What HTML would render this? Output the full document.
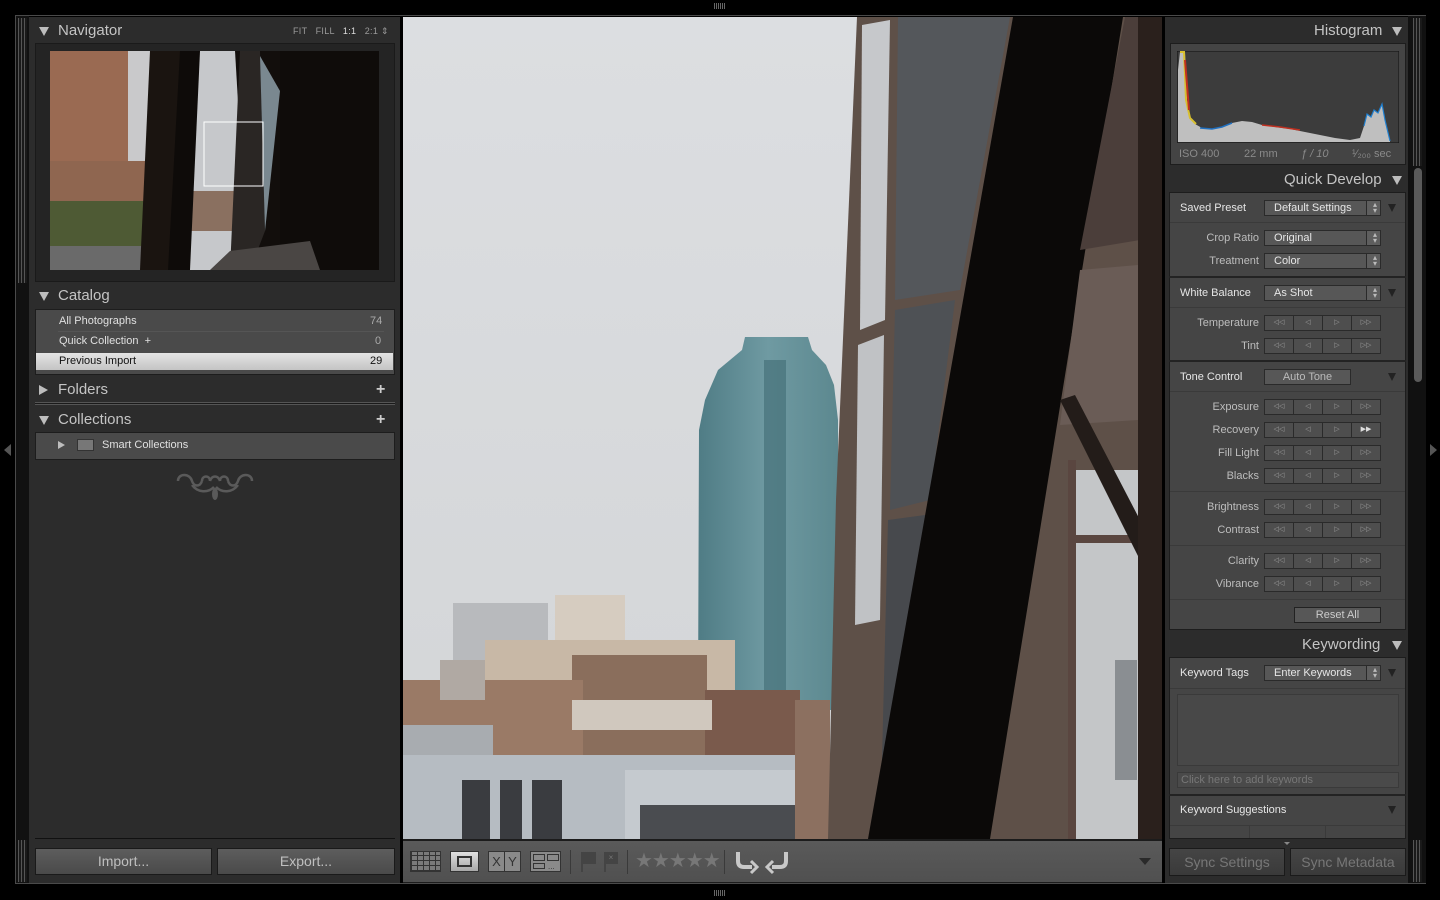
<!DOCTYPE html>
<html><head><meta charset="utf-8">
<style>
*{box-sizing:border-box;margin:0;padding:0}
body{width:1440px;height:900px;background:#000;position:relative;overflow:hidden;font-family:"Liberation Sans",sans-serif;color:#c8c8c8}
.a{position:absolute}
.hdr{position:absolute;font-size:15px;color:#c4c4c4}
.tri{position:absolute;width:0;height:0;border-left:5px solid transparent;border-right:5px solid transparent;border-top:9px solid #bdbdbd}
.trir{position:absolute;width:0;height:0;border-top:5px solid transparent;border-bottom:5px solid transparent;border-left:9px solid #bdbdbd}
.sm{font-size:11px;color:#e0e0e0}
.lbl{position:absolute;font-size:11px;color:#bdbdbd;text-align:right;width:90px;left:1169px}
.lblL{position:absolute;font-size:11px;color:#e6e6e6;left:1180px}
.dd{position:absolute;left:1264px;width:117px;height:16px;background:#575757;border:1px solid #2a2a2a;font-size:11px;color:#e6e6e6;padding:1px 0 0 9px}
.dd:after{content:"";position:absolute;right:0;top:0;width:13px;height:14px;border-left:1px solid #2a2a2a;background:#5e5e5e}
.dd i{position:absolute;right:3px;top:1px;font-style:normal;font-size:8px;color:#bbb;line-height:6px;z-index:2}
.st{position:absolute;left:1264px;width:117px;height:16px;background:#4e4e4e;border:1px solid #2a2a2a;display:flex}
.st span{flex:1;border-left:1px solid #2a2a2a;font-size:7px;color:#999;text-align:center;line-height:14px}
.st span:first-child{border-left:none}
.ln{position:absolute;height:1px;background:#3a3a3a;left:1170px;width:235px}
.sep{position:absolute;height:2px;background:#232323;left:1169px;width:237px}
.btn{position:absolute;background:linear-gradient(#5d5d5d,#4a4a4a);border:1px solid #1a1a1a;font-size:14px;color:#bfbfbf;text-align:center}
</style></head><body>

<div class="a" style="left:15px;top:15px;width:1411px;height:869px;border:1px solid #4a4a4a"></div>
<div class="a" style="left:16px;top:16px;width:13px;height:867px;background:#111"></div>
<div class="a" style="left:18px;top:18px;width:9px;height:265px;background:repeating-linear-gradient(90deg,#555 0 1px,#1a1a1a 1px 3px)"></div>
<div class="a" style="left:18px;top:840px;width:9px;height:42px;background:repeating-linear-gradient(90deg,#555 0 1px,#1a1a1a 1px 3px)"></div>
<div class="a" style="left:1408px;top:16px;width:18px;height:867px;background:#111"></div>
<div class="a" style="left:1413px;top:18px;width:9px;height:148px;background:repeating-linear-gradient(90deg,#555 0 1px,#1a1a1a 1px 3px)"></div>
<div class="a" style="left:1413px;top:840px;width:9px;height:42px;background:repeating-linear-gradient(90deg,#555 0 1px,#1a1a1a 1px 3px)"></div>
<div class="a" style="left:1414px;top:168px;width:8px;height:214px;background:#5a5a5a;border-radius:4px"></div>

<div class="a" style="left:4px;top:444px;width:0;height:0;border-top:6px solid transparent;border-bottom:6px solid transparent;border-right:7px solid #555"></div>
<div class="a" style="left:1430px;top:444px;width:0;height:0;border-top:6px solid transparent;border-bottom:6px solid transparent;border-left:7px solid #555"></div>
<div class="a" style="left:714px;top:3px;width:12px;height:6px;background:repeating-linear-gradient(90deg,#666 0 1px,transparent 1px 2px)"></div>
<div class="a" style="left:714px;top:890px;width:12px;height:6px;background:repeating-linear-gradient(90deg,#666 0 1px,transparent 1px 2px)"></div>

<!-- LEFT PANEL -->
<div class="a" style="left:29px;top:17px;width:371px;height:866px;background:#2c2c2c"></div>
<div class="tri" style="left:39px;top:27px"></div>
<div class="hdr" style="left:58px;top:22px">Navigator</div>
<div class="a" style="left:293px;top:26px;font-size:9px;color:#9a9a9a;letter-spacing:.3px">FIT &nbsp;&nbsp;FILL &nbsp;&nbsp;<span style="color:#ddd">1:1</span> &nbsp;&nbsp;2:1 ⇕</div>
<div class="a" style="left:35px;top:43px;width:360px;height:239px;background:#242424;border:1px solid #1a1a1a"></div>
<svg class="a" style="left:50px;top:51px" width="329" height="219" viewBox="0 0 329 219">
<rect width="329" height="219" fill="#120e0c"/>
<rect x="0" y="0" width="120" height="219" fill="#c9c9cb"/>
<rect x="0" y="0" width="78" height="150" fill="#9a6a52"/>
<rect x="0" y="110" width="100" height="40" fill="#8f6650"/>
<rect x="0" y="150" width="100" height="55" fill="#4e5a34"/>
<rect x="0" y="195" width="100" height="24" fill="#6a6a6a"/>
<polygon points="100,0 140,0 128,219 90,219" fill="#1a1410"/>
<polygon points="145,0 185,0 198,220 138,220" fill="#c6c8cb"/>
<rect x="135" y="140" width="60" height="40" fill="#8a7060"/>
<polygon points="130,0 150,0 140,219 118,219" fill="#0e0b09"/>
<polygon points="190,0 210,0 215,180 200,219 180,219" fill="#2a2624"/>
<polygon points="210,5 230,40 215,180" fill="#7a8890"/>
<rect x="230" y="0" width="99" height="219" fill="#0f0c0a"/>
<polygon points="180,200 260,190 270,219 160,219" fill="#4a4644"/>
<rect x="154" y="71" width="59" height="64" fill="none" stroke="#fff" stroke-width="1"/>
</svg>

<div class="tri" style="left:39px;top:292px"></div>
<div class="hdr" style="left:58px;top:287px">Catalog</div>
<div class="a" style="left:35px;top:309px;width:360px;height:66px;background:#4a4a4a;border:1px solid #1d1d1d"></div>
<div class="a" style="left:58px;top:331px;width:326px;height:1px;background:#555"></div>
<div class="a sm" style="left:59px;top:315px">All Photographs</div><div class="a sm" style="left:370px;top:315px;color:#aaa">74</div>
<div class="a sm" style="left:59px;top:335px">Quick Collection &nbsp;+</div><div class="a sm" style="left:375px;top:335px;color:#aaa">0</div>
<div class="a" style="left:36px;top:353px;width:357px;height:17px;background:linear-gradient(#e4e4e4,#c4c4c4)"></div>
<div class="a sm" style="left:59px;top:355px;color:#111">Previous Import</div><div class="a sm" style="left:370px;top:355px;color:#111">29</div>

<div class="trir" style="left:39px;top:385px"></div>
<div class="hdr" style="left:58px;top:381px">Folders</div>
<div class="a" style="left:376px;top:381px;font-size:16px;color:#ccc;font-weight:bold">+</div>
<div class="a" style="left:35px;top:402px;width:360px;height:3px;border-top:1px solid #555;border-bottom:1px solid #555;background:#1a1a1a"></div>
<div class="tri" style="left:39px;top:416px"></div>
<div class="hdr" style="left:58px;top:411px">Collections</div>
<div class="a" style="left:376px;top:411px;font-size:16px;color:#ccc;font-weight:bold">+</div>
<div class="a" style="left:35px;top:432px;width:360px;height:28px;background:#4a4a4a;border:1px solid #1d1d1d"></div>
<div class="trir" style="left:58px;top:441px;border-left-width:7px;border-top-width:4px;border-bottom-width:4px"></div>
<div class="a" style="left:77px;top:439px;width:17px;height:12px;background:#777;border:1px solid #333"></div>
<div class="a sm" style="left:102px;top:439px">Smart Collections</div>
<svg class="a" style="left:172px;top:467px" width="86" height="34" viewBox="0 0 86 34" fill="none" stroke="#5a5a5a" stroke-width="2.5">
<path d="M6,14 c0,-8 12,-8 14,0 c2,6 8,6 10,0 M80,14 c0,-8 -12,-8 -14,0 c-2,6 -8,6 -10,0 M30,14 c0,-6 8,-6 8,0 M56,14 c0,-6 -8,-6 -8,0 M38,14 c2,-6 8,-6 10,0 M20,18 c6,8 16,8 22,2 M66,18 c-6,8 -16,8 -22,2"/>
<ellipse cx="43" cy="27" rx="3" ry="6" fill="#5a5a5a" stroke="none"/>
</svg>

<div class="a" style="left:35px;top:838px;width:360px;height:1px;background:#111"></div>
<div class="btn" style="left:35px;top:848px;width:177px;height:27px;line-height:25px">Import...</div>
<div class="btn" style="left:217px;top:848px;width:178px;height:27px;line-height:25px">Export...</div>

<!-- PHOTO -->
<svg class="a" style="left:403px;top:17px" width="759" height="822" viewBox="403 17 759 822">
<defs><linearGradient id="sky" x1="0" y1="0" x2="0" y2="1"><stop offset="0" stop-color="#dcdee1"/><stop offset="1" stop-color="#d3d5d7"/></linearGradient>
<linearGradient id="tw" x1="0" y1="0" x2="1" y2="0"><stop offset="0" stop-color="#4f7c85"/><stop offset=".5" stop-color="#6f9aa2"/><stop offset="1" stop-color="#5c888f"/></linearGradient></defs>
<rect x="403" y="17" width="759" height="822" fill="url(#sky)"/>
<path d="M742,350 L745,337 L808,337 L812,350 L826,365 L834,385 L838,420 L838,710 L698,710 L699,430 L705,400 L718,370 Z" fill="url(#tw)"/>
<rect x="764" y="360" width="22" height="350" fill="#3f6a73" opacity=".6"/>
<rect x="453" y="603" width="95" height="110" fill="#b8babd"/>
<rect x="555" y="595" width="70" height="60" fill="#d6ccc0"/>
<rect x="485" y="640" width="250" height="100" fill="#c8b8a6"/>
<rect x="572" y="655" width="135" height="140" fill="#8a6e5c"/>
<rect x="403" y="680" width="180" height="80" fill="#9a7a66"/>
<rect x="440" y="660" width="45" height="40" fill="#b0a9a3"/>
<rect x="705" y="690" width="95" height="120" fill="#7a5a4c"/>
<rect x="572" y="700" width="140" height="30" fill="#d0c8be"/>
<rect x="403" y="725" width="90" height="30" fill="#a8acb0"/>
<rect x="403" y="755" width="395" height="84" fill="#b6bcc2"/>
<rect x="625" y="770" width="200" height="69" fill="#c5cacf"/>
<rect x="462" y="780" width="100" height="59" fill="#3a3c40"/>
<rect x="490" y="780" width="10" height="59" fill="#b6bcc2"/>
<rect x="522" y="780" width="10" height="59" fill="#b6bcc2"/>
<rect x="640" y="805" width="160" height="34" fill="#4a4c50"/>
<rect x="795" y="700" width="35" height="139" fill="#8c7060"/>
<polygon points="857,17 1162,17 1162,839 828,839 836,500" fill="#5e5048"/>
<polygon points="862,25 890,20 885,320 860,330" fill="#c6c8cb"/>
<polygon points="858,345 884,335 880,620 855,625" fill="#c0c2c5"/>
<polygon points="898,17 1010,17 960,290 895,300" fill="#54575b"/>
<polygon points="895,310 955,300 930,500 890,510" fill="#4e5155"/>
<polygon points="888,520 925,515 900,839 880,839" fill="#47494d"/>
<polygon points="1013,17 1123,17 990,839 868,839" fill="#0b0908"/>
<polygon points="1125,17 1140,17 1140,240 1080,250" fill="#4b3e3a"/>
<polygon points="1080,270 1138,265 1138,420 1060,425" fill="#6a5c56"/>
<rect x="1075" y="470" width="65" height="369" fill="#c4c6c8"/>
<rect x="1068" y="460" width="8" height="379" fill="#5a4640"/>
<rect x="1068" y="535" width="72" height="8" fill="#5a4640"/>
<polygon points="1060,400 1075,395 1140,520 1140,560" fill="#231c19"/>
<rect x="1138" y="17" width="24" height="822" fill="#2a201c"/>
<rect x="1115" y="660" width="22" height="120" fill="#8a8e92"/>
</svg>

<!-- TOOLBAR -->
<div class="a" style="left:403px;top:839px;width:759px;height:44px;background:#1c1c1c"></div>
<div class="a" style="left:403px;top:841px;width:759px;height:41px;background:linear-gradient(#5a5a5a,#505050)"></div>
<div class="a" style="left:410px;top:851px;width:31px;height:21px;background:repeating-linear-gradient(90deg,#333 0 1px,transparent 1px 6px),repeating-linear-gradient(0deg,#333 0 1px,#7a7a7a 1px 5px);border:1px solid #333"></div>
<div class="a" style="left:450px;top:851px;width:29px;height:21px;background:linear-gradient(#e0e0e0,#a8a8a8);border:1px solid #333"><div style="margin:4px 6px;height:11px;border:2px solid #333"></div></div>
<div class="a" style="left:488px;top:851px;width:33px;height:21px;background:#8a8a8a;border:1px solid #333;font-size:13px;color:#333;line-height:19px;display:flex"><span style="flex:1;text-align:center;border-right:1px solid #333">X</span><span style="flex:1;text-align:center">Y</span></div>
<div class="a" style="left:530px;top:851px;width:31px;height:21px;background:#8a8a8a;border:1px solid #333"><div class="a" style="left:2px;top:2px;width:12px;height:7px;border:1px solid #333"></div><div class="a" style="left:16px;top:2px;width:12px;height:7px;border:1px solid #333"></div><div class="a" style="left:2px;top:11px;width:12px;height:6px;border:1px solid #333"></div><div class="a" style="left:17px;top:12px;font-size:8px;color:#333;line-height:6px">...</div></div>
<div class="a" style="left:570px;top:850px;width:1px;height:24px;background:#3a3a3a"></div>
<div class="a" style="left:581px;top:852px;width:15px;height:12px;background:#444"></div><div class="a" style="left:581px;top:852px;width:2px;height:20px;background:#444"></div>
<div class="a" style="left:604px;top:852px;width:14px;height:12px;background:#444;font-size:8px;color:#777;text-align:center;line-height:11px">×</div><div class="a" style="left:604px;top:852px;width:2px;height:20px;background:#444"></div>
<div class="a" style="left:627px;top:850px;width:1px;height:24px;background:#3a3a3a"></div>
<div class="a" style="left:635px;top:849px;font-size:20px;line-height:24px;color:#777;letter-spacing:-1px">★★★★★</div>
<div class="a" style="left:724px;top:850px;width:1px;height:24px;background:#3a3a3a"></div>
<svg class="a" style="left:734px;top:849px" width="56" height="26" viewBox="0 0 56 26" fill="none" stroke="#c8c8c8" stroke-width="4">
<path d="M4,3 v9 q0,6 6,6 h8"/><path d="M17,12 l6,6 l-6,6" stroke-width="3"/>
<path d="M52,3 v9 q0,6 -6,6 h-8"/><path d="M39,12 l-6,6 l6,6" stroke-width="3"/>
</svg>
<div class="a" style="left:1139px;top:858px;width:0;height:0;border-left:6px solid transparent;border-right:6px solid transparent;border-top:7px solid #2a2a2a"></div>

<!-- RIGHT PANEL -->
<div class="a" style="left:1165px;top:17px;width:243px;height:866px;background:#2c2c2c"></div>
<div class="hdr" style="left:1314px;top:22px">Histogram</div>
<div class="tri" style="left:1392px;top:27px"></div>
<div class="a" style="left:1170px;top:43px;width:236px;height:122px;background:#444;border:1px solid #1d1d1d"></div>
<svg class="a" style="left:1177px;top:51px" width="222" height="92" viewBox="1177 51 222 92">
<rect x="1177" y="51" width="222" height="92" fill="#3c3c3c" stroke="#111"/>
<path d="M1178,142 L1178,70 L1180,52 L1185,52 L1187,100 L1190,118 L1195,124 L1202,128 L1212,129 L1222,127 L1232,123 L1242,121 L1252,122 L1262,125 L1275,127 L1290,129 L1305,132 L1320,135 L1335,138 L1350,140 L1360,138 L1364,126 L1367,114 L1371,117 L1374,110 L1378,113 L1382,104 L1385,120 L1390,141 L1390,142 Z" fill="#bfbfbf"/>
<path d="M1180,52 L1184,52 L1186,100 L1190,118 L1196,124" stroke="#d8c030" stroke-width="2" fill="none"/>
<path d="M1185,60 L1189,110" stroke="#c03020" stroke-width="2" fill="none"/>
<path d="M1200,128 L1212,129 L1222,127 L1232,123" stroke="#2070c0" stroke-width="1.5" fill="none"/>
<path d="M1262,125 L1280,127 L1300,130" stroke="#c03020" stroke-width="1.5" fill="none"/>
<path d="M1364,126 L1367,114 L1371,117 L1374,110 L1378,113 L1382,104 L1385,120 L1390,141" stroke="#2080d0" stroke-width="1.2" fill="none"/>
</svg>
<div class="a" style="left:1179px;top:148px;font-size:11px;color:#8a8a8a">ISO 400</div>
<div class="a" style="left:1244px;top:148px;font-size:11px;color:#8a8a8a">22 mm</div>
<div class="a" style="left:1301px;top:148px;font-size:11px;color:#8a8a8a;font-style:italic">ƒ / 10</div>
<div class="a" style="left:1352px;top:148px;font-size:11px;color:#8a8a8a">¹⁄₂₀₀ sec</div>

<div class="hdr" style="left:1284px;top:171px">Quick Develop</div>
<div class="tri" style="left:1392px;top:176px"></div>
<div class="a" style="left:1169px;top:192px;width:237px;height:438px;background:#454545;border:1px solid #1d1d1d"></div>

<div class="lblL" style="top:202px">Saved Preset</div>
<div class="dd" style="top:200px">Default Settings<i>▴<br>▾</i></div>
<div class="tri" style="left:1388px;top:204px;border-top-color:#222;border-left-width:4px;border-right-width:4px;border-top-width:8px"></div>
<div class="ln" style="top:222px"></div>
<div class="lbl" style="top:232px">Crop Ratio</div><div class="dd" style="top:230px">Original<i>▴<br>▾</i></div>
<div class="lbl" style="top:255px">Treatment</div><div class="dd" style="top:253px">Color<i>▴<br>▾</i></div>
<div class="sep" style="top:276px"></div>

<div class="lblL" style="top:287px">White Balance</div>
<div class="dd" style="top:285px">As Shot<i>▴<br>▾</i></div>
<div class="tri" style="left:1388px;top:289px;border-top-color:#222;border-left-width:4px;border-right-width:4px;border-top-width:8px"></div>
<div class="ln" style="top:307px"></div>
<div class="lbl" style="top:317px">Temperature</div><div class="st" style="top:315px"><span>◁◁</span><span>◁</span><span>▷</span><span>▷▷</span></div>
<div class="lbl" style="top:340px">Tint</div><div class="st" style="top:338px"><span>◁◁</span><span>◁</span><span>▷</span><span>▷▷</span></div>
<div class="sep" style="top:360px"></div>

<div class="lblL" style="top:371px">Tone Control</div>
<div class="a" style="left:1264px;top:369px;width:87px;height:16px;background:#575757;border:1px solid #2a2a2a;font-size:11px;color:#bbb;text-align:center;line-height:14px">Auto Tone</div>
<div class="tri" style="left:1388px;top:373px;border-top-color:#222;border-left-width:4px;border-right-width:4px;border-top-width:8px"></div>
<div class="ln" style="top:391px"></div>
<div class="lbl" style="top:401px">Exposure</div><div class="st" style="top:399px"><span>◁◁</span><span>◁</span><span>▷</span><span>▷▷</span></div>
<div class="lbl" style="top:424px">Recovery</div><div class="st" style="top:422px"><span>◁◁</span><span>◁</span><span>▷</span><span style="color:#ddd">▶▶</span></div>
<div class="lbl" style="top:447px">Fill Light</div><div class="st" style="top:445px"><span>◁◁</span><span>◁</span><span>▷</span><span>▷▷</span></div>
<div class="lbl" style="top:470px">Blacks</div><div class="st" style="top:468px"><span>◁◁</span><span>◁</span><span>▷</span><span>▷▷</span></div>
<div class="ln" style="top:491px"></div>
<div class="lbl" style="top:501px">Brightness</div><div class="st" style="top:499px"><span>◁◁</span><span>◁</span><span>▷</span><span>▷▷</span></div>
<div class="lbl" style="top:524px">Contrast</div><div class="st" style="top:522px"><span>◁◁</span><span>◁</span><span>▷</span><span>▷▷</span></div>
<div class="ln" style="top:545px"></div>
<div class="lbl" style="top:555px">Clarity</div><div class="st" style="top:553px"><span>◁◁</span><span>◁</span><span>▷</span><span>▷▷</span></div>
<div class="lbl" style="top:578px">Vibrance</div><div class="st" style="top:576px"><span>◁◁</span><span>◁</span><span>▷</span><span>▷▷</span></div>
<div class="ln" style="top:599px"></div>
<div class="a" style="left:1294px;top:607px;width:87px;height:16px;background:#575757;border:1px solid #222;font-size:11px;color:#ccc;text-align:center;line-height:14px">Reset All</div>

<div class="hdr" style="left:1302px;top:636px">Keywording</div>
<div class="tri" style="left:1392px;top:641px"></div>
<div class="a" style="left:1169px;top:657px;width:237px;height:182px;background:#454545;border:1px solid #1d1d1d"></div>
<div class="lblL" style="top:667px">Keyword Tags</div>
<div class="dd" style="top:665px">Enter Keywords<i>▴<br>▾</i></div>
<div class="tri" style="left:1388px;top:669px;border-top-color:#222;border-left-width:4px;border-right-width:4px;border-top-width:8px"></div>
<div class="ln" style="top:688px"></div>
<div class="a" style="left:1177px;top:694px;width:222px;height:72px;background:#484848;border:1px solid #3a3a3a"></div>
<div class="a" style="left:1177px;top:772px;width:222px;height:16px;background:#4a4a4a;border:1px solid #3a3a3a;font-size:11px;color:#777;padding:1px 0 0 3px">Click here to add keywords</div>
<div class="sep" style="top:794px"></div>
<div class="lblL" style="top:804px">Keyword Suggestions</div>
<div class="tri" style="left:1388px;top:806px;border-top-color:#222;border-left-width:4px;border-right-width:4px;border-top-width:8px"></div>
<div class="ln" style="top:825px"></div>
<div class="a" style="left:1249px;top:826px;width:1px;height:12px;background:#3a3a3a"></div>
<div class="a" style="left:1325px;top:826px;width:1px;height:12px;background:#3a3a3a"></div>
<div class="a" style="left:1284px;top:842px;width:0;height:0;border-left:3px solid transparent;border-right:3px solid transparent;border-top:3px solid #888"></div>

<div class="btn" style="left:1169px;top:848px;width:116px;height:28px;line-height:26px;color:#777;background:linear-gradient(#454545,#3a3a3a)">Sync Settings</div>
<div class="btn" style="left:1290px;top:848px;width:116px;height:28px;line-height:26px;color:#777;background:linear-gradient(#454545,#3a3a3a)">Sync Metadata</div>

</body></html>
